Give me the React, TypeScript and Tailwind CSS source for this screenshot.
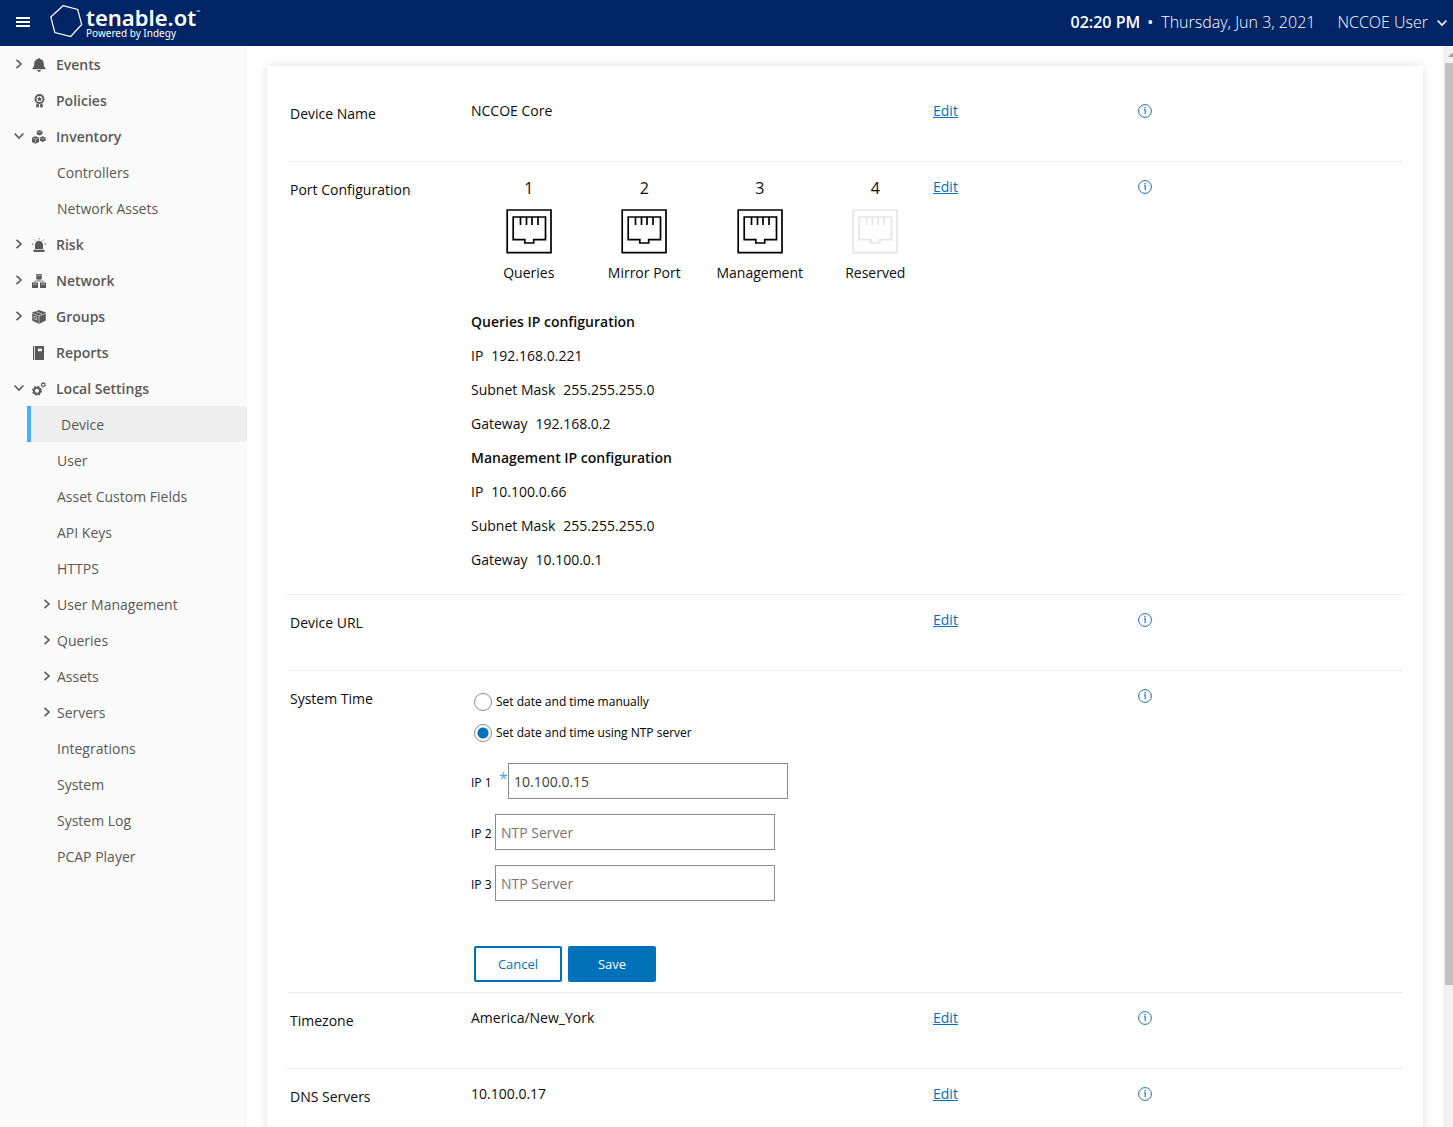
import React, { useState } from "react";

type IconProps = { className?: string };

function Svg({ children, className = "" }: { children: React.ReactNode; className?: string }) {
  return (
    <svg viewBox="0 0 14 14" className={"size-3.5 shrink-0 " + className} fill="currentColor" aria-hidden="true">
      {children}
    </svg>
  );
}

const BellIcon = () => (
  <Svg>
    <path d="M7 0c.6 0 1 .4 1 1 2.300.4 3.700 2.200 3.700 4.300 0 3 .9 4.200 1.800 4.900v1H.5v-1c.9-.7 1.800-1.900 1.800-4.900C2.300 3.200 3.700 1.400 6 1c0-.6.4-1 1-1z" />
    <path d="M5.200 12h3.600c0 1-.8 1.800-1.800 1.800S5.200 13 5.200 12z" />
  </Svg>
);

const PolicyIcon = () => (
  <Svg>
    <circle cx="7.500" cy="5" r="4" fill="none" stroke="currentColor" strokeWidth="1.800" />
    <path d="M7.500 2.500l.8 1.600 1.700.2-1.200 1.200.3 1.700-1.600-.8-1.600.8.3-1.700L5 4.300l1.700-.2z" />
    <path d="M4.500 9.200l2.400 1v3.600l-1.200-.9-1.700.5zM10.500 9.200l-2.400 1v3.600l1.200-.9 1.700.5z" />
  </Svg>
);

const InventoryIcon = () => (
  <Svg>
    <path d="M7.500 0l2.900 1v3.300L7.500 5.600 4.700 4.300V1z" />
    <path d="M3.600 6.200l3.500 1.200v4.700l-3.500 1.700L0 12.100V7.400z" />
    <path d="M10.700 6.200l3 1.300v2.900l-3 1.500-2.800-1.500V7.500z" />
    <path d="M5.200 1.500l2.300.8 2.300-.8M.6 8l3 1.100 3-1.100M3.600 9.100v4M8.400 8l2.300 1 2.400-1" fill="none" stroke="#fafafa" strokeWidth=".5" />
  </Svg>
);

const RiskIcon = () => (
  <Svg>
    <path d="M3 11V6.700C3 4.400 4.700 2.700 7 2.700s4 1.700 4 4V11z" />
    <path d="M1.500 11.700h11V14h-11z" />
    <path d="M7 0v1.500M2.200 1.600l1 1M11.800 1.600l-1 1M0 6.200h1.600M12.400 6.200H14" stroke="currentColor" strokeWidth=".9" />
  </Svg>
);

const NetworkIcon = () => (
  <Svg>
    <path d="M4.300 0h5.400v5.400H4.300zM0 8.500h6V14H0zM8 8.500h6V14H8z" />
    <path d="M7 5v2M2.900 8.700V7h8.200v1.700" fill="none" stroke="currentColor" strokeWidth=".7" />
    <path d="M5.300 1.300h3.400M1 10.100h3.800M9.200 10.100H13" stroke="#fafafa" strokeWidth=".6" />
  </Svg>
);

const GroupsIcon = () => (
  <Svg>
    <path d="M7 0l6.800 2.500v8L7 14 .2 10.500v-8z" />
    <path d="M.4 3.400L7 6l6.600-2.600M7 6v7.800M3.800 1.600l6.600 2.600M2 6.200v2.500l2.600 1.200V7.200z" fill="none" stroke="#fafafa" strokeWidth=".6" />
  </Svg>
);

const ReportsIcon = () => (
  <Svg>
    <path d="M1 0h1.200v14H1zM3 0h9v14H3z" />
    <path d="M6 2.700h4v2.500H6z" fill="#fafafa" />
  </Svg>
);

const SettingsIcon = () => (
  <Svg>
    <circle cx="5" cy="8.800" r="3.100" fill="none" stroke="currentColor" strokeWidth="2" />
    <circle cx="5" cy="8.800" r="4.400" fill="none" stroke="currentColor" strokeWidth="1.200" strokeDasharray="1.730 1.726" />
    <circle cx="11.300" cy="2.800" r="1.700" fill="none" stroke="currentColor" strokeWidth="1.100" />
    <circle cx="11.300" cy="2.800" r="2.400" fill="none" stroke="currentColor" strokeWidth=".7" strokeDasharray=".95 .935" />
  </Svg>
);

const ChevronRight = ({ className = "" }: IconProps) => (
  <svg viewBox="0 0 8 10" className={"h-2.5 w-2 shrink-0 " + className} fill="none" stroke="currentColor" strokeWidth="1.600" aria-hidden="true">
    <path d="M1.500 .8L6 5 1.500 9.200" />
  </svg>
);

const ChevronDown = ({ className = "" }: IconProps) => (
  <svg viewBox="0 0 10 8" className={"h-2 w-2.5 shrink-0 " + className} fill="none" stroke="currentColor" strokeWidth="1.600" aria-hidden="true">
    <path d="M.6 1.500L5 6l4.400-4.500" />
  </svg>
);

type Group = {
  label: string;
  icon: () => React.JSX.Element;
  state?: "open" | "closed";
  items?: { label: string; nested?: boolean; active?: boolean }[];
};

const NAV: Group[] = [
  { label: "Events", icon: BellIcon, state: "closed" },
  { label: "Policies", icon: PolicyIcon },
  { label: "Inventory", icon: InventoryIcon, state: "open", items: [{ label: "Controllers" }, { label: "Network Assets" }] },
  { label: "Risk", icon: RiskIcon, state: "closed" },
  { label: "Network", icon: NetworkIcon, state: "closed" },
  { label: "Groups", icon: GroupsIcon, state: "closed" },
  { label: "Reports", icon: ReportsIcon },
  {
    label: "Local Settings",
    icon: SettingsIcon,
    state: "open",
    items: [
      { label: "Device", active: true },
      { label: "User" },
      { label: "Asset Custom Fields" },
      { label: "API Keys" },
      { label: "HTTPS" },
      { label: "User Management", nested: true },
      { label: "Queries", nested: true },
      { label: "Assets", nested: true },
      { label: "Servers", nested: true },
      { label: "Integrations" },
      { label: "System" },
      { label: "System Log" },
      { label: "PCAP Player" },
    ],
  },
];

function Header() {
  return (
    <header className="flex h-[46px] shrink-0 items-center justify-between bg-[#002566] pr-1.5 pb-0.5 pl-4 text-white">
      <div className="flex items-center">
        <button type="button" aria-label="Toggle menu" className="flex w-3.5 flex-col gap-0.5">
          <span className="h-0.5 w-full bg-white" />
          <span className="h-0.5 w-full bg-white" />
          <span className="h-0.5 w-full bg-white" />
        </button>
        <svg viewBox="0 0 34 34" className="ml-5 size-[34px]" fill="none" stroke="white" strokeWidth="1.200" aria-hidden="true">
          <path d="M13 .7L27.700 4.500 31.700 19.500 20.700 31.500 4.800 27.500.8 12z" />
        </svg>
        <div className="ml-0.5 flex flex-col font-['Noto_Sans',sans-serif]">
          <span className="flex items-start text-[22px] leading-[22px] font-semibold">
            tenable.ot<span className="text-[5px] leading-3">™</span>
          </span>
          <span className="text-[10px] leading-[10px]">Powered by Indegy</span>
        </div>
      </div>
      <div className="flex items-center text-base">
        <span className="font-semibold">02:20 PM</span>
        <span className="mr-2 ml-[7px]">•</span>
        <span className="font-light">Thursday, Jun 3, 2021</span>
        <button type="button" className="ml-[22px] flex items-center gap-[9px] font-light">
          NCCOE User
          <ChevronDown className="mt-0.5" />
        </button>
      </div>
    </header>
  );
}

function Sidebar() {
  return (
    <nav className="w-[247px] shrink-0 overflow-hidden bg-[#fafafa] text-sm text-[#595959]">
      {NAV.map(({ label, icon: Icon, state, items }) => (
        <div key={label}>
          <a href="#" className="flex h-9 items-center pt-0.5 pl-3.5 font-semibold">
            <span className="flex w-[18px] pb-0.5">
              {state === "closed" && <ChevronRight className="ml-px" />}
              {state === "open" && <ChevronDown />}
            </span>
            <Icon />
            <span className="ml-2.5">{label}</span>
          </a>
          {items?.map((item) =>
            item.active ? (
              <a key={item.label} href="#" aria-current="page" className="ml-[27px] flex h-9 items-center border-l-4 border-[#43b0ff] bg-[#eeeeee] pt-0.5 pl-[30px]">
                {item.label}
              </a>
            ) : (
              <a key={item.label} href="#" className="flex h-9 items-center pt-0.5 pl-[43px]">
                <span className="w-3.5 pb-0.5">{item.nested && <ChevronRight />}</span>
                {item.label}
              </a>
            )
          )}
        </div>
      ))}
    </nav>
  );
}

function PortIcon({ muted }: { muted?: boolean }) {
  return (
    <svg viewBox="0 0 46 46" className={muted ? "size-[46px] text-[#e6e6e6]" : "size-[46px] text-black"} fill="none" stroke="currentColor" strokeWidth="1.700" aria-hidden="true">
      <path d="M1.200 1H45V43.700H1.200zM7.200 8H39.500V30.600H27.700V34H18.800V30.600H7.200z" />
      <path d="M14.500 8V16M20.500 8V16M26 8V16M32 8V16" />
    </svg>
  );
}

const InfoButton = ({ label }: { label: string }) => (
  <button type="button" aria-label={"About " + label} className="mt-[18px] block size-3.5 text-[#1a6fb8]">
    <svg viewBox="0 0 14 14" className="size-3.5" fill="none" stroke="currentColor" aria-hidden="true">
      <circle cx="7" cy="7" r="6.400" strokeWidth="1" />
      <path d="M6 5.700H7.200V10.300" strokeWidth="1.100" />
      <circle cx="7" cy="3.800" r=".8" fill="currentColor" stroke="none" />
    </svg>
  </button>
);

function Row({ label, children, editable = true }: { label: string; children?: React.ReactNode; editable?: boolean }) {
  return (
    <section className="grid min-h-[76px] grid-cols-[minmax(0,184fr)_minmax(0,462fr)_minmax(0,205fr)_minmax(0,265fr)] border-b border-[#ebebeb]">
      <h2 className="pt-[18px] pl-[3px]">{label}</h2>
      <div className="pt-[15px]">{children}</div>
      <div className="pt-[15px]">
        {editable && (
          <a href="#" className="text-[#0071b9] underline">
            Edit
          </a>
        )}
      </div>
      <div>
        <InfoButton label={label} />
      </div>
    </section>
  );
}

const PORTS = ["Queries", "Mirror Port", "Management", "Reserved"];

const IP_CONFIG = [
  { title: "Queries IP configuration", values: [["IP", "192.168.0.221"], ["Subnet Mask", "255.255.255.0"], ["Gateway", "192.168.0.2"]] },
  { title: "Management IP configuration", values: [["IP", "10.100.0.66"], ["Subnet Mask", "255.255.255.0"], ["Gateway", "10.100.0.1"]] },
];

function PortConfiguration() {
  return (
    <>
      <ul className="grid grid-cols-4">
        {PORTS.map((name, i) => (
          <li key={name} className="flex flex-col items-center">
            <span className="text-base leading-[22px]">{i + 1}</span>
            <span className="mt-2.5 mb-2">
              <PortIcon muted={name === "Reserved"} />
            </span>
            {name}
          </li>
        ))}
      </ul>
      <div className="mt-[22px] pb-[17px] leading-[34px]">
        {IP_CONFIG.map((block) => (
          <div key={block.title}>
            <h3 className="font-semibold">{block.title}</h3>
            {block.values.map(([key, value]) => (
              <p key={key} className="flex gap-2">
                <span>{key}</span>
                <span>{value}</span>
              </p>
            ))}
          </div>
        ))}
      </div>
    </>
  );
}

const RADIO =
  "size-[18px] appearance-none rounded-full border border-[#8c8c8c] bg-white checked:bg-[radial-gradient(circle,#0071b9_5px,white_6px)]";

function SystemTime() {
  const [mode, setMode] = useState("ntp");
  const [servers, setServers] = useState(["10.100.0.15", "", ""]);
  return (
    <form className="pb-2.5" onSubmit={(e) => e.preventDefault()}>
      <div className="flex flex-col gap-[13px] pt-[7px] pl-[3px] text-xs text-black">
        {[
          ["manual", "Set date and time manually"],
          ["ntp", "Set date and time using NTP server"],
        ].map(([value, text]) => (
          <label key={value} className="flex h-[18px] items-center gap-1">
            <input type="radio" name="time-mode" value={value} checked={mode === value} onChange={() => setMode(value)} className={RADIO} />
            {text}
          </label>
        ))}
      </div>
      <div className="mt-[21px] flex flex-col gap-[15px]">
        {servers.map((server, i) => (
          <div key={i} className="flex items-center">
            <label htmlFor={"ntp-" + i} className="flex items-center text-xs font-medium text-black">
              <span className="w-6 pt-1">IP {i + 1}</span>
              {i === 0 && (
                <span className="w-[13px] pb-1.5 pl-1 text-base leading-5 font-normal text-[#43a5f5]">*</span>
              )}
            </label>
            <input
              id={"ntp-" + i}
              type="text"
              value={server}
              placeholder="NTP Server"
              onChange={(e) => setServers(servers.map((s, j) => (j === i ? e.target.value : s)))}
              className="h-9 w-[280px] border border-[#8c8c8c] px-[5px] text-[#404040] placeholder:text-[#757575]"
            />
          </div>
        ))}
      </div>
      <div className="mt-[45px] flex gap-1.5 pl-[3px] text-[13px]">
        <button type="button" className="h-9 w-[88px] rounded-xs border-2 border-[#0071b9] text-[#0071b9]">
          Cancel
        </button>
        <button type="submit" className="h-9 w-[88px] rounded-xs bg-[#0071b9] font-medium text-white">
          Save
        </button>
      </div>
    </form>
  );
}

function Scrollbar() {
  return (
    <div className="flex w-2.5 shrink-0 flex-col overflow-hidden bg-[#f1f1f1] pl-0.5" aria-hidden="true">
      <svg viewBox="0 0 8 17" className="h-[17px] w-2 shrink-0" fill="#a3a3a3">
        <path d="M3 11L7 7l4 4z" />
      </svg>
      <div className="flex-[13] bg-[#c1c1c1]" />
      <div className="flex-[2]" />
    </div>
  );
}

export default function App() {
  return (
    <div className="flex h-screen flex-col bg-white font-['Open_Sans',sans-serif] text-sm text-[#0d0d0d]">
      <Header />
      <div className="flex min-h-0 flex-1">
        <Sidebar />
        <main className="min-w-0 flex-1 overflow-hidden p-5">
          <div className="bg-white p-5 shadow-[0_0_10px_rgba(0,0,0,0.12)]">
            <Row label="Device Name">NCCOE Core</Row>
            <Row label="Port Configuration">
              <PortConfiguration />
            </Row>
            <Row label="Device URL" />
            <Row label="System Time" editable={false}>
              <SystemTime />
            </Row>
            <Row label="Timezone">America/New_York</Row>
            <Row label="DNS Servers">10.100.0.17</Row>
          </div>
        </main>
        <Scrollbar />
      </div>
    </div>
  );
}
